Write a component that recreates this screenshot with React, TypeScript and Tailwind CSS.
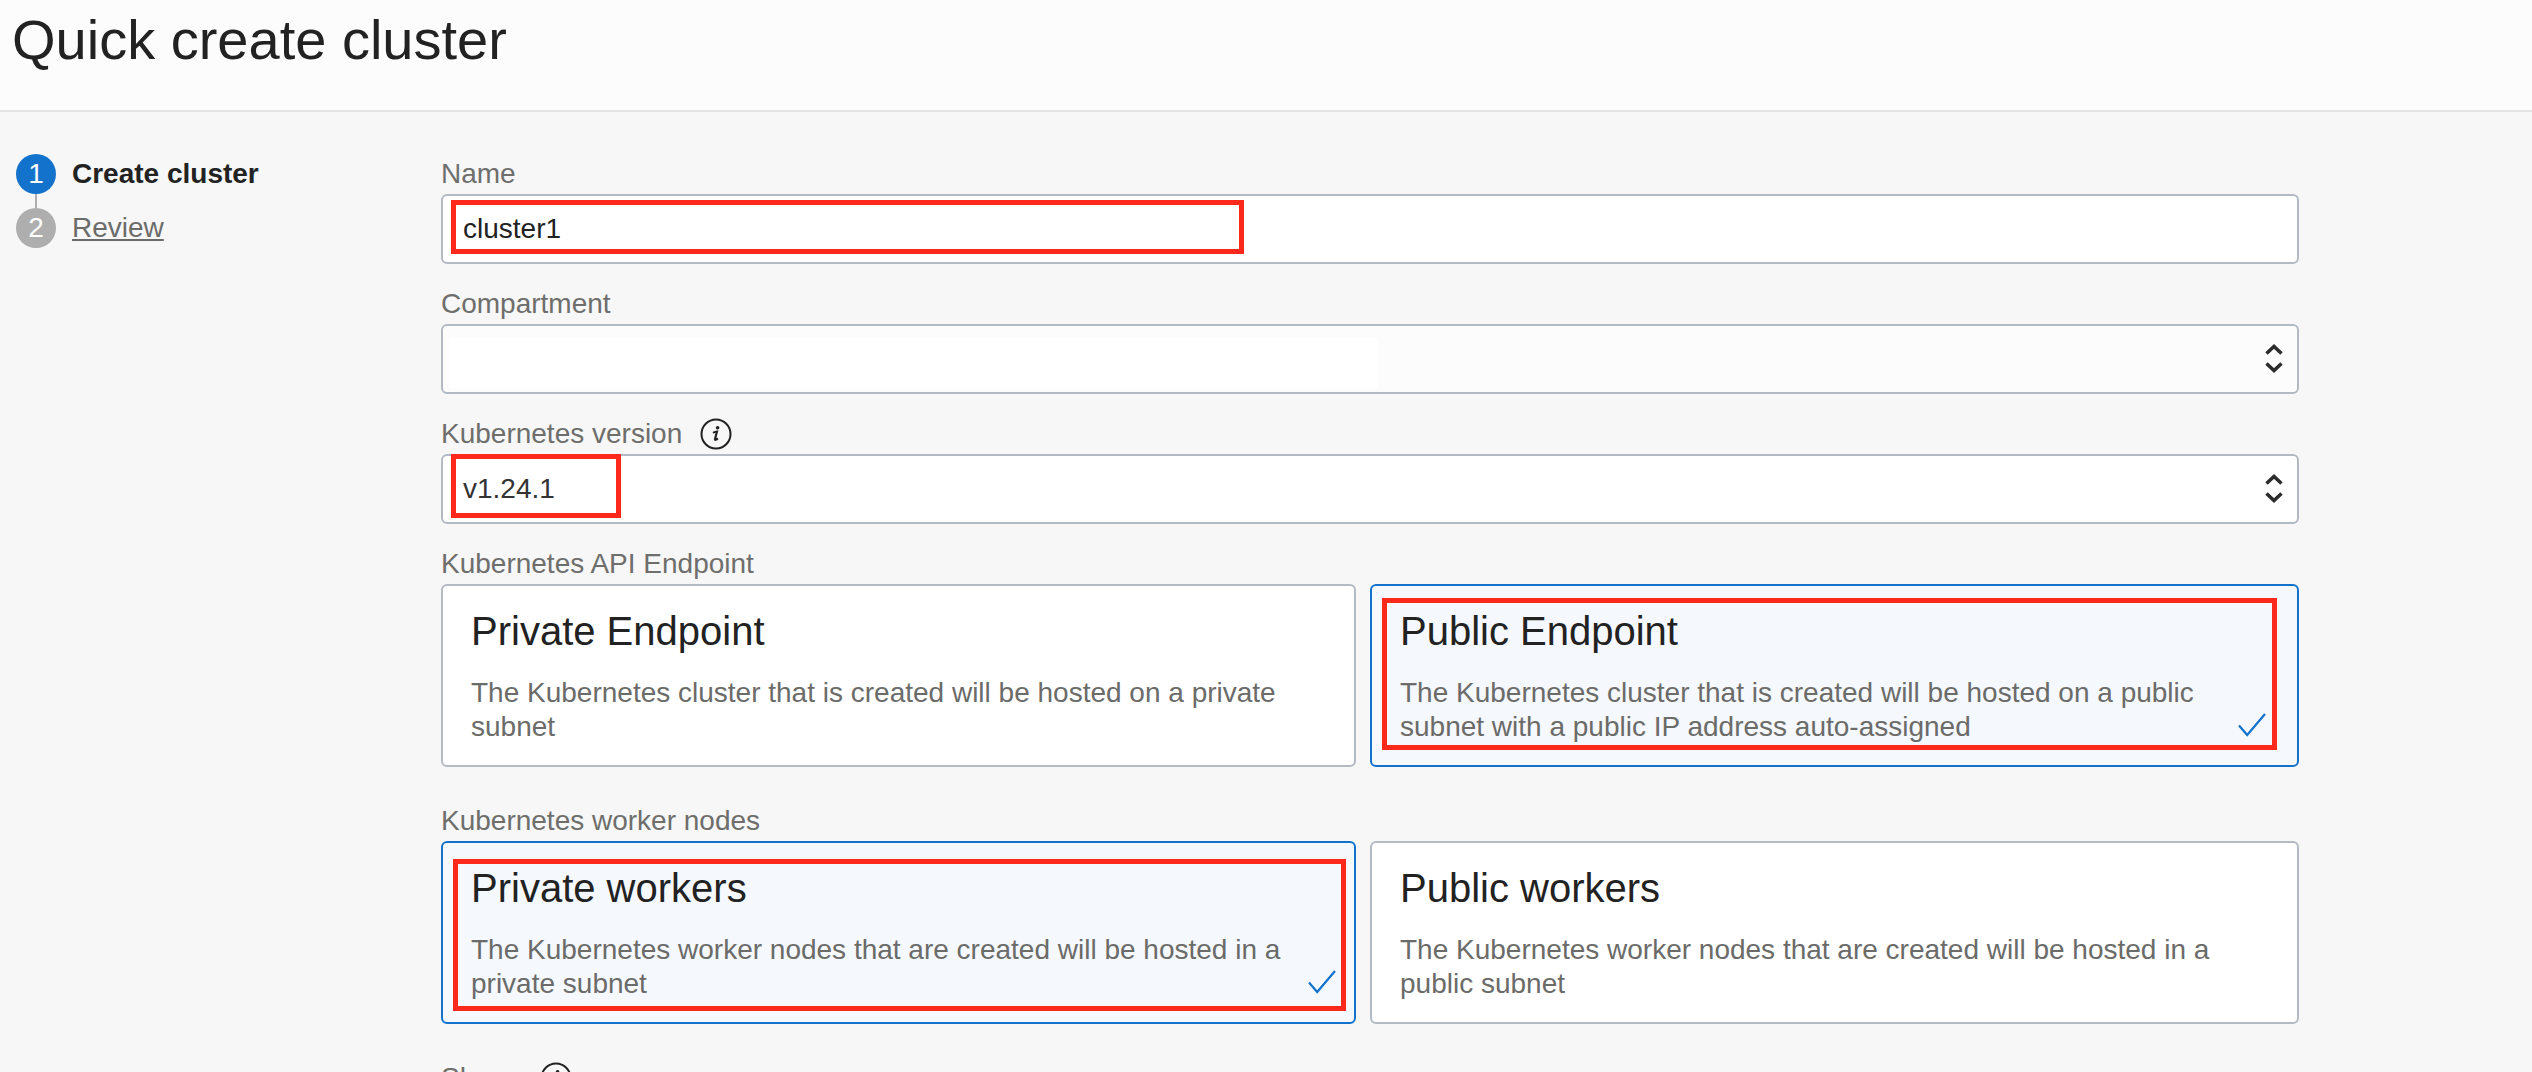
import { useId, useState, type ReactNode } from "react";

function InfoIcon() {
  return (
    <svg viewBox="0 0 32 32" className="size-8" fill="none" aria-hidden="true">
      <circle cx="16" cy="16" r="14.5" stroke="#222" strokeWidth="2" />
      <circle cx="17.6" cy="9.8" r="1.8" fill="#222" />
      <path d="M13 14.9c1.6-.9 2.6-1.3 4-1.4l-2 7.500c-.2 1.200.7 1.100 2.900-.7" stroke="#222" strokeWidth="2.2" />
    </svg>
  );
}

function Label({ htmlFor, info, children }: { htmlFor?: string; info?: string; children: ReactNode }) {
  return (
    <div className="flex h-10 items-center gap-[18px] whitespace-nowrap text-[#6e6e6c]">
      {htmlFor ? <label htmlFor={htmlFor}>{children}</label> : <span>{children}</span>}
      {info && (
        <button type="button" aria-label={info}>
          <InfoIcon />
        </button>
      )}
    </div>
  );
}

function Chevrons() {
  return (
    <svg
      viewBox="0 0 18 30"
      className="pointer-events-none absolute top-5 right-4 h-[30px] w-[18px]"
      fill="none"
      stroke="#2b2b2b"
      strokeWidth="3.5"
      aria-hidden="true"
    >
      <path d="M1.5 9.500 9 2.500l7.500 7M1.500 19.500l7.500 7 7.500-7" />
    </svg>
  );
}

function Select({ id, options, className }: { id: string; options: string[]; className: string }) {
  return (
    <div className="relative">
      <select
        id={id}
        className={`block h-[70px] w-full appearance-none rounded-md border-2 border-[#b4bac5] px-5 text-[#333] ${className}`}
      >
        {options.map((o) => (
          <option key={o}>{o}</option>
        ))}
      </select>
      <Chevrons />
    </div>
  );
}

type Option = { value: string; title: string; text: string; check: string; mark?: ReactNode };

function CardGroup({ label, options, initial }: { label: string; options: Option[]; initial: string }) {
  const name = useId();
  const [value, setValue] = useState(initial);
  return (
    <div role="radiogroup" aria-label={label} className="mb-[34px]">
      <Label>{label}</Label>
      <div className="grid grid-cols-[915fr_929fr] gap-3.5">
        {options.map((o) => {
          const on = o.value === value;
          return (
            <label
              key={o.value}
              className={`relative block cursor-pointer rounded-md border-2 px-7 pt-5 pb-[21px] ${
                on ? "border-[#1373cc] bg-[#f5f8fd]" : "border-[#b4bac5] bg-white"
              }`}
            >
              <input
                type="radio"
                name={name}
                checked={on}
                onChange={() => setValue(o.value)}
                className="sr-only"
              />
              <span className="block text-[40px] leading-[50px] text-[#222]">{o.title}</span>
              <span className="mt-5 block leading-[34px] text-[#6b6b69]">{o.text}</span>
              {on && (
                <svg
                  viewBox="0 0 28 24"
                  className={`absolute bottom-7 h-6 w-7 ${o.check}`}
                  fill="none"
                  stroke="#1373cc"
                  strokeWidth="2.2"
                  aria-hidden="true"
                >
                  <path d="M1 12.500 9.200 22 27 1" />
                </svg>
              )}
              {o.mark}
            </label>
          );
        })}
      </div>
    </div>
  );
}

const mark = "pointer-events-none absolute border-[5px] border-[#fd291c]";

export default function App() {
  return (
    <div className="h-screen overflow-hidden bg-[#f7f7f7] font-['Liberation_Sans',Arial,sans-serif] text-[28px] leading-[34px] text-[#222]">
      <header className="border-b-2 border-[#e5e5e5] bg-[#fcfcfc] px-3 pt-2 pb-[38px]">
        <h1 className="text-[56px] leading-[64px]">Quick create cluster</h1>
      </header>
      <div className="flex pt-[42px]">
        <nav aria-label="Steps" className="w-[441px] shrink-0 pl-4">
          <ol>
            <li className="flex items-center gap-4">
              <span className="flex size-10 items-center justify-center rounded-full bg-[#1373cc] text-white">1</span>
              <span className="font-bold" aria-current="step">Create cluster</span>
            </li>
            <li aria-hidden="true" className="ml-[19px] h-3.5 w-0.5 bg-[#aeaeae]" />
            <li className="flex items-center gap-4">
              <span className="flex size-10 items-center justify-center rounded-full bg-[#aeaeae] text-white">2</span>
              <a href="#review" className="text-[#6b6b69] underline decoration-2 underline-offset-2">
                Review
              </a>
            </li>
          </ol>
        </nav>
        <main className="mr-[233px] min-w-0 flex-1">
          <div className="mb-5">
            <Label htmlFor="name">Name</Label>
            <div className="relative">
              <input
                id="name"
                defaultValue="cluster1"
                className="block h-[70px] w-full rounded-md border-2 border-[#b4bac5] bg-white px-5"
              />
              <div className={`${mark} top-1.5 left-2.5 h-[54px] w-[793px]`} />
            </div>
          </div>
          <div className="mb-5">
            <Label htmlFor="compartment">Compartment</Label>
            <div className="relative">
              <Select id="compartment" options={[""]} className="bg-[#fcfcfc]" />
              <div className="pointer-events-none absolute top-3.5 left-2 h-[50px] w-1/2 bg-white" />
            </div>
          </div>
          <div className="mb-5">
            <Label htmlFor="version" info="About Kubernetes versions">
              Kubernetes version
            </Label>
            <div className="relative">
              <Select id="version" options={["v1.24.1"]} className="bg-white" />
              <div className={`${mark} top-0 left-2.5 h-16 w-[170px]`} />
            </div>
          </div>
          <CardGroup
            label="Kubernetes API Endpoint"
            initial="public"
            options={[
              {
                value: "private",
                title: "Private Endpoint",
                text: "The Kubernetes cluster that is created will be hosted on a private subnet",
                check: "right-[18px]",
              },
              {
                value: "public",
                title: "Public Endpoint",
                text: "The Kubernetes cluster that is created will be hosted on a public subnet with a public IP address auto-assigned",
                check: "right-[31px]",
                mark: <span className={`${mark} top-3 right-5 left-2.5 h-[152px]`} />,
              },
            ]}
          />
          <CardGroup
            label="Kubernetes worker nodes"
            initial="private"
            options={[
              {
                value: "private",
                title: "Private workers",
                text: "The Kubernetes worker nodes that are created will be hosted in a private subnet",
                check: "right-[18px]",
                mark: <span className={`${mark} top-4 right-2 left-2.5 h-[152px]`} />,
              },
              {
                value: "public",
                title: "Public workers",
                text: "The Kubernetes worker nodes that are created will be hosted in a public subnet",
                check: "right-[31px]",
              },
            ]}
          />
          <Label info="About shapes">Shape</Label>
        </main>
      </div>
    </div>
  );
}
